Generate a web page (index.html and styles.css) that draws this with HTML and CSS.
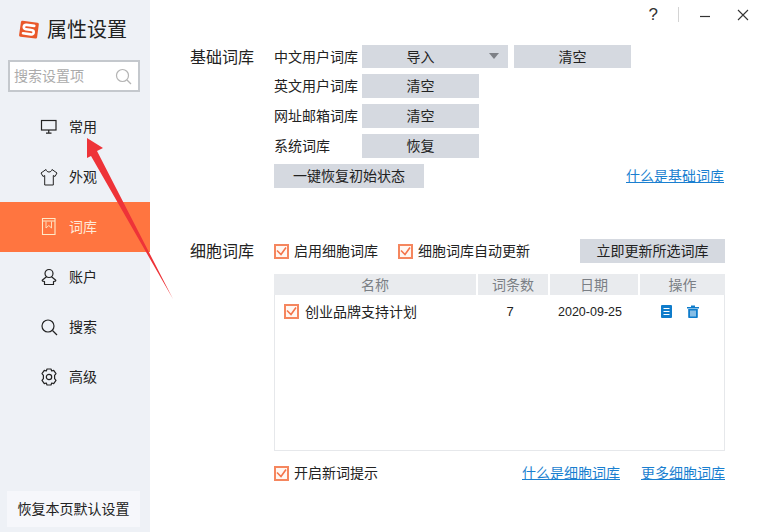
FILE: index.html
```html
<!DOCTYPE html>
<html lang="zh-CN">
<head>
<meta charset="utf-8">
<title>属性设置</title>
<link rel="stylesheet" href="styles.css">
</head>
<body>
<div class="window">
  <aside class="sidebar">
    <div class="brand">
      <svg class="logo" width="20" height="20" viewBox="0 0 20 20"><path d="M3.600 .8 18.500 2.800c.9.1 1.400.8 1.300 1.700l-1.700 12.700c-.1 1-.8 1.500-1.700 1.400L1.500 16.700c-1-.2-1.500-.9-1.400-1.800L1.900 2.200C2 1.300 2.700.7 3.600.8Z" fill="#e9582a"/><path d="M15.300 5.900 7.600 4.900C5.800 4.700 5 5.400 4.800 6.800 4.600 8.200 5.400 9 6.900 9.200L12.400 10C14.100 10.200 14.900 11 14.700 12.400 14.500 13.900 13.500 14.600 11.900 14.400L4 13.300" fill="none" stroke="#fff" stroke-width="2.600" stroke-linecap="round"/></svg>
      <span class="brand-title">属性设置</span>
    </div>
    <div class="search">
      <span class="search-text">搜索设置项</span>
      <svg width="17" height="17" viewBox="0 0 17 17" fill="none" stroke="#b4b4b4" stroke-width="1.200"><circle cx="7.500" cy="7.500" r="6"/><path d="m12 12 4 4"/></svg>
    </div>
    <nav class="nav">
      <div class="nav-item">
        <svg class="nav-icon" width="18" height="18" viewBox="0 0 18 18" fill="none" stroke="#222" stroke-width="1.200"><rect x="1.500" y="2.500" width="14.500" height="9.500"/><path d="M8.750 12v3M6 15.200h5.500"/></svg>
        <span class="nav-text">常用</span>
      </div>
      <div class="nav-item">
        <svg class="nav-icon" width="18" height="18" viewBox="0 0 18 18" fill="none" stroke="#222" stroke-width="1" stroke-linejoin="round"><path d="M6 1.500 1 5l2 3.500 1.700-1V17h8.600V7.500l1.700 1L17 5l-5-3.500C11.500 3.200 10.500 4 9 4S6.500 3.200 6 1.500Z"/></svg>
        <span class="nav-text">外观</span>
      </div>
      <div class="nav-item is-active">
        <svg class="nav-icon" width="18" height="18" viewBox="0 0 18 18" fill="none" stroke="#ffe9c8" stroke-width="1.100"><path d="M2.500 .500h12.500v16H2.500zM2.500 3h12.500"/><path d="M6 3.500v6.500l2.800-2.500 2.700 2.500V3.500" stroke-width=".9"/></svg>
        <span class="nav-text">词库</span>
      </div>
      <div class="nav-item">
        <svg class="nav-icon" width="18" height="18" viewBox="0 0 18 18" fill="none" stroke="#222" stroke-width="1.200" stroke-linejoin="round"><circle cx="9" cy="5.500" r="4"/><path d="M6.500 8.800 2.500 12c-.5.500-.3 1 .2 1.200l1.800.3v3h9v-3l1.800-.3c.5-.2.700-.7.200-1.200l-4-3.200"/></svg>
        <span class="nav-text">账户</span>
      </div>
      <div class="nav-item">
        <svg class="nav-icon" width="18" height="18" viewBox="0 0 18 18" fill="none" stroke="#222" stroke-width="1.200"><circle cx="8" cy="8" r="6"/><path d="m12.500 12.500 4.500 4.500"/></svg>
        <span class="nav-text">搜索</span>
      </div>
      <div class="nav-item">
        <svg class="nav-icon" width="18" height="18" viewBox="0 0 18 18" fill="none" stroke="#222" stroke-width="1.200" stroke-linejoin="round"><path d="M7 1h4l.7 2 2-.6 2.300 3.200-1.400 1.700v3.400L16 12.400l-2.300 3.200-2-.6-.7 2H7l-.7-2-2 .6L2 12.400l1.400-1.700V7.300L2 5.600l2.300-3.200 2 .6Z"/><circle cx="9" cy="9" r="2.700"/></svg>
        <span class="nav-text">高级</span>
      </div>
    </nav>
    <div class="reset-page">恢复本页默认设置</div>
  </aside>

  <main class="main">
    <div class="titlebar">
      <span class="help">?</span>
      <span class="bar-sep"></span>
      <svg class="win-btn" width="12" height="12" viewBox="0 0 12 12" stroke="#333" stroke-width="1.200"><path d="M1 7.500h10"/></svg>
      <svg class="win-btn close" width="12" height="12" viewBox="0 0 12 12" stroke="#333" stroke-width="1.100"><path d="m1 1 10 10M11 1 1 11"/></svg>
    </div>

    <section class="section basic">
      <h2 class="section-label">基础词库</h2>
      <div class="section-body">
        <div class="row first">
          <span class="row-label">中文用户词库</span>
          <button class="btn btn-import">导入<i class="caret"></i></button>
          <button class="btn btn-std clear-cn">清空</button>
        </div>
        <div class="row">
          <span class="row-label">英文用户词库</span>
          <button class="btn btn-std">清空</button>
        </div>
        <div class="row">
          <span class="row-label">网址邮箱词库</span>
          <button class="btn btn-std">清空</button>
        </div>
        <div class="row">
          <span class="row-label">系统词库</span>
          <button class="btn btn-std">恢复</button>
        </div>
        <div class="row row-last">
          <button class="btn btn-restore">一键恢复初始状态</button>
          <a class="link">什么是基础词库</a>
        </div>
      </div>
    </section>

    <section class="section cell">
      <h2 class="section-label">细胞词库</h2>
      <div class="section-body">
        <div class="cell-top">
          <label class="check"><i class="box"><svg width="11" height="11" viewBox="0 0 11 11" fill="none" stroke="#f4744a" stroke-width="1.600"><path d="m1 4.500 4 4 5-7"/></svg></i><span class="check-text">启用细胞词库</span></label>
          <label class="check"><i class="box"><svg width="11" height="11" viewBox="0 0 11 11" fill="none" stroke="#f4744a" stroke-width="1.600"><path d="m1 4.500 4 4 5-7"/></svg></i><span class="check-text">细胞词库自动更新</span></label>
          <button class="btn btn-update">立即更新所选词库</button>
        </div>
        <div class="table">
          <div class="thead">
            <span>名称</span><span>词条数</span><span>日期</span><span>操作</span>
          </div>
          <div class="tr">
            <label class="check td-name"><i class="box"><svg width="11" height="11" viewBox="0 0 11 11" fill="none" stroke="#f4744a" stroke-width="1.600"><path d="m1 4.500 4 4 5-7"/></svg></i><span class="check-text">创业品牌支持计划</span></label>
            <span class="td-num">7</span>
            <span class="td-num td-date">2020-09-25</span>
            <span class="td-ops">
              <svg width="11" height="13" viewBox="0 0 11 13"><rect width="11" height="13" rx="1" fill="#0f7ccb"/><path d="M2.500 3.500h6M2.500 6.500h6M2.500 9.500h6" stroke="#fff" stroke-width="1.200"/></svg>
              <svg width="12" height="13" viewBox="0 0 12 13"><path d="M4 .500h4v1.500H4zM0 2h12v1.500H0zM1.200 4h9.600v8c0 .6-.4 1-1 1H2.200c-.6 0-1-.4-1-1Z" fill="#0f7ccb"/><path d="M4 5.500v6M6 5.500v6M8 5.500v6" stroke="#fff"/></svg>
            </span>
          </div>
        </div>
        <div class="cell-foot">
          <label class="check"><i class="box"><svg width="11" height="11" viewBox="0 0 11 11" fill="none" stroke="#f4744a" stroke-width="1.600"><path d="m1 4.500 4 4 5-7"/></svg></i><span class="check-text">开启新词提示</span></label>
          <a class="link foot-link">什么是细胞词库</a>
          <a class="link">更多细胞词库</a>
        </div>
      </div>
    </section>
  </main>

  <svg class="annotation" width="758" height="532" viewBox="0 0 758 532"><path d="M87 138 103 148 97 151 173 299 91 156 87 158Z" fill="#ee3338"/></svg>
</div>
</body>
</html>
```
FILE: styles.css
```css
* { box-sizing: border-box; }
html, body { margin: 0; padding: 0; }
body {
  font-family: "Noto Sans CJK SC", "Liberation Sans", sans-serif;
  font-size: 14px;
  color: #222;
  background: #fff;
}
.window {
  position: relative;
  display: flex;
  width: 758px;
  height: 532px;
  overflow: hidden;
}
.annotation { position: absolute; left: 0; top: 0; pointer-events: none; }

/* sidebar */
.sidebar {
  display: flex;
  flex-direction: column;
  width: 150px;
  flex: none;
  background: #eef1f6;
  padding-top: 19px;
}
.brand {
  display: flex;
  align-items: center;
  gap: 8px;
  height: 22px;
  padding-left: 19px;
}
.logo { flex: none; }
.brand-title { font-size: 20px; line-height: 20px; padding-bottom: 2px; color: #222; }
.search {
  display: flex;
  align-items: center;
  justify-content: space-between;
  width: 132px;
  height: 32px;
  margin: 19px 0 0 8px;
  padding: 0 6px 0 4px;
  background: #fff;
  border: 2px solid #c4c8cd;
}
.search-text { color: #ababab; font-size: 14px; line-height: 20px; padding-bottom: 2px; }
.nav { margin-top: 10px; }
.nav-item {
  display: flex;
  align-items: center;
  height: 50px;
  padding-left: 40px;
  gap: 11px;
  line-height: 20px;
}
.nav-icon { flex: none; }
.nav-text { padding-bottom: 2px; }
.nav-item.is-active { background: #ff7540; color: #ffe9d8; }
.reset-page {
  margin: auto 0 5px 7px;
  width: 133px;
  height: 36px;
  line-height: 34px;
  text-align: center;
  background: #f6f7fb;
}

/* main */
.main { flex: 1; padding-left: 40px; }
.titlebar {
  display: flex;
  align-items: center;
  justify-content: flex-end;
  height: 45px;
  padding: 0 9px 16px 0;
}
.help { font-size: 17px; line-height: 20px; color: #333; margin-right: 20px; font-family: "Liberation Sans", sans-serif; }
.bar-sep { width: 1px; height: 15px; background: #d4d4d4; margin-right: 20px; }
.win-btn { margin-right: 26px; }
.win-btn.close { margin-right: 0; }

.section { display: flex; }
.section-label {
  width: 84px;
  flex: none;
  margin: 0;
  font-size: 16px;
  font-weight: 400;
  line-height: 22px;
  color: #222;
}
.section-body { width: 451px; flex: none; }
.row {
  display: flex;
  align-items: center;
  height: 24px;
  margin-bottom: 6px;
}
.row.first { height: 23px; }
.row-label { width: 88px; flex: none; line-height: 20px; padding-bottom: 2px; }
.row-last { justify-content: space-between; padding-right: 1px; margin-bottom: 0; }

.btn {
  position: relative;
  height: 100%;
  padding: 0 0 2px;
  border: 0;
  background: #d5d9e0;
  color: #222;
  font: inherit;
  line-height: 20px;
}
.btn-std { width: 117px; }
.btn-import { width: 146px; padding-right: 29px; }
.clear-cn { margin-left: 6px; }
.btn-restore { width: 150px; }
.caret {
  position: absolute;
  right: 9px;
  top: 8px;
  border: 5.500px solid transparent;
  border-top: 6px solid #7d8086;
  border-bottom: 0;
}
.link {
  color: #1a7fd0;
  text-decoration: underline;
  line-height: 20px;
  padding-bottom: 3px;
}

/* cell section */
.cell { margin-top: 51px; }
.cell-top {
  display: flex;
  align-items: center;
  height: 24px;
}
.check { display: flex; align-items: center; gap: 5px; line-height: 20px; }
.check-text { padding-bottom: 2px; }
.cell-top .check { margin-right: 20px; }
.box {
  display: flex;
  align-items: center;
  justify-content: center;
  width: 15px;
  height: 15px;
  flex: none;
  border: 2px solid #f5865e;
  background: #fff7f2;
}
.btn-update { width: 145px; height: 24px; margin-left: auto; }
.table {
  height: 177px;
  margin-top: 11px;
  border: 1px solid #e6e8eb;
  border-top: 0;
}
.thead, .tr {
  display: grid;
  column-gap: 2px;
}
.thead {
  grid-template-columns: 202px 70px 88px 85px;
  height: 21px;
  margin: 0 -1px;
}
.thead span {
  background: #e9ebee;
  color: #7b7f85;
  text-align: center;
  line-height: 21px;
}
.tr {
  grid-template-columns: 201px 70px 88px 84px;
  height: 33px;
  align-items: center;
}
.td-name { padding-left: 9px; gap: 6px; }
.td-num { text-align: center; line-height: 20px; padding-right: 6px; font-family: "Liberation Sans", sans-serif; font-size: 13px; }
.td-date { font-size: 12.500px; padding-right: 8px; }
.td-ops { display: flex; align-items: center; justify-content: center; gap: 15px; padding-right: 5px; }
.cell-foot {
  display: flex;
  align-items: center;
  height: 20px;
  margin-top: 12px;
}
.foot-link { margin-left: auto; margin-right: 21px; }
```
